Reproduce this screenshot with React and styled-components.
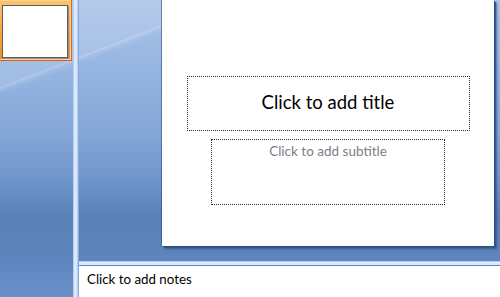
import React from "react";
import styled, { createGlobalStyle } from "styled-components";

const Global = createGlobalStyle`
  html, body { margin: 0; padding: 0; }
  body { width: 500px; height: 297px; overflow: hidden; font-family: Lato, "Noto Sans", sans-serif; }
`;

const Window = styled.div`
  width: 500px;
  height: 297px;
  display: flex;
  overflow: hidden;
  background:
    linear-gradient(159deg,
      rgba(255,255,255,0.13) 0px,
      rgba(255,255,255,0.13) 81px,
      rgba(255,255,255,0.3) 82px,
      rgba(255,255,255,0.12) 84px,
      rgba(255,255,255,0) 89px),
    linear-gradient(180deg, #a9c3e9 0px, #95b5e0 70px, #86a8d9 130px, #7297cd 175px, #5c81b8 215px, #5d84bd 255px, #6990c9 297px);
`;

const ThumbPanel = styled.div`
  width: 73px;
  flex: none;
  overflow: hidden;
`;

const ThumbFrame = styled.div`
  box-sizing: border-box;
  width: 74px;
  height: 62px;
  margin: -1px 0 0 -2px;
  padding: 5px 4px 3px 3px;
  background: linear-gradient(180deg, #fbc470 0%, #f6a23a 60%, #f28a25 100%);
  border: 1px solid #f5b050;
  border-right-color: #e4641c;
  border-bottom-color: #e4561a;
  box-shadow: inset 0 0 0 1px #fcd494;
`;

const Thumb = styled.div`
  box-sizing: border-box;
  width: 66px;
  height: 53px;
  background: #fff;
  border: 1px solid #5e5e5e;
  box-shadow: 1px 1px 0 #8f8f8f;
`;

const VSplitter = styled.div`
  width: 6px;
  flex: none;
  background: linear-gradient(90deg, #9dbfec 0, #d6e6fb 20%, #e3eefc 50%, #b9d2f3 75%, #6f95cf 100%);
`;

const MainColumn = styled.div`
  flex: 1;
  display: flex;
  flex-direction: column;
  min-width: 0;
`;

const SlideArea = styled.div`
  flex: 1;
  display: flex;
  align-items: flex-start;
  padding-left: 83px;
  overflow: hidden;
`;

const Slide = styled.div`
  box-sizing: border-box;
  width: 332px;
  height: 246px;
  background: #fff;
  display: flex;
  flex-direction: column;
  align-items: center;
  padding-top: 76px;
  gap: 8px;
  box-shadow: -1px 0 0 rgba(40,70,120,0.55), 1px 1px 0 #2d4c7d, 2px 2px 1px #38578a, 3px 3px 2px rgba(30,55,100,0.5);
`;

const Placeholder = styled.div`
  box-sizing: border-box;
  width: ${(p) => p.$w}px;
  height: ${(p) => p.$h}px;
  border: 1px dotted #2a2a2a;
  display: flex;
  justify-content: center;
  align-items: ${(p) => (p.$top ? "flex-start" : "center")};
  padding-top: ${(p) => (p.$top ? "3px" : "0")};
  padding-bottom: ${(p) => (p.$top ? "0" : "3px")};
  font-family: Lato, "Noto Sans", sans-serif;
  font-size: ${(p) => p.$size}px;
  color: ${(p) => p.$color};
  white-space: nowrap;
`;

const HSplitter = styled.div`
  height: 5px;
  flex: none;
  background: linear-gradient(180deg, #b3cdf0 0, #b3cdf0 20%, #dfeafc 20%, #dfeafc 80%, #4f86d0 80%);
`;

const NotesPane = styled.div`
  height: 31px;
  flex: none;
  background: #fff;
  padding: 5px 0 0 8px;
  box-sizing: border-box;
  font-family: Lato, "Noto Sans", sans-serif;
  font-size: 13.3px;
  color: #000;
`;

export default function App() {
  return (
    <>
      <Global />
      <Window>
        <ThumbPanel>
          <ThumbFrame>
            <Thumb />
          </ThumbFrame>
        </ThumbPanel>
        <VSplitter />
        <MainColumn>
          <SlideArea>
            <Slide>
              <Placeholder $w={283} $h={55} $size={18.5} $color="#000">
                Click to add title
              </Placeholder>
              <Placeholder $w={234} $h={66} $size={13.5} $color="#7a7f87" $top>
                Click to add subtitle
              </Placeholder>
            </Slide>
          </SlideArea>
          <HSplitter />
          <NotesPane>Click to add notes</NotesPane>
        </MainColumn>
      </Window>
    </>
  );
}
